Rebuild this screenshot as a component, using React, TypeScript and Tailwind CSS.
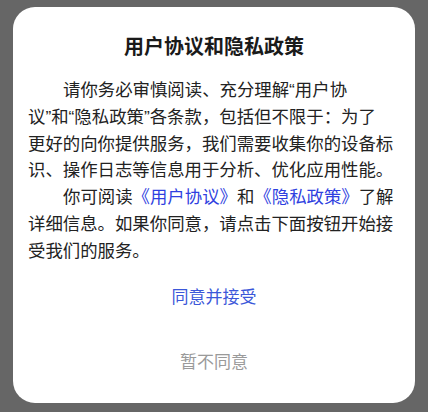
import React from "react";

const font = { fontFamily: '"Liberation Sans", "Noto Sans CJK SC", sans-serif' };

export default function App() {
  const lines: React.ReactNode[] = [
    <span className="pl-[35px]">请你务必审慎阅读、充分理解“用户协</span>,
    <span>议”和“隐私政策”各条款，包括但不限于：为了</span>,
    <span>更好的向你提供服务，我们需要收集你的设备标</span>,
    <span>识、操作日志等信息用于分析、优化应用性能。</span>,
    <span className="pl-[35px]">
      你可阅读<span className="text-[#2f3fe0]">《用户协议》</span>和<span className="text-[#2f3fe0]">《隐私政策》</span>了解
    </span>,
    <span>详细信息。如果你同意，请点击下面按钮开始接</span>,
    <span>受我们的服务。</span>,
  ];
  return (
    <div className="w-[428px] h-[412px] bg-[#666666] pt-[7px] px-[13px]" style={font}>
      <div className="bg-white rounded-[22px] h-[396px] flex flex-col">
        <div className="pt-[26px] text-center text-[20px] leading-[28px] font-bold text-[#1a1a1a]">
          用户协议和隐私政策
        </div>
        <div className="mt-[16px] pl-[15px] text-[17.4px] leading-[26.8px] text-[#222222]">
          {lines.map((l, i) => (
            <div key={i} className="whitespace-nowrap">
              {l}
            </div>
          ))}
        </div>
        <div className="mt-[20px] h-[26px] flex items-center justify-center text-[17px] text-[#3b57d9]">
          同意并接受
        </div>
        <div className="mt-[39px] h-[26px] flex items-center justify-center text-[17px] text-[#9a9a9a]">
          暂不同意
        </div>
      </div>
    </div>
  );
}
